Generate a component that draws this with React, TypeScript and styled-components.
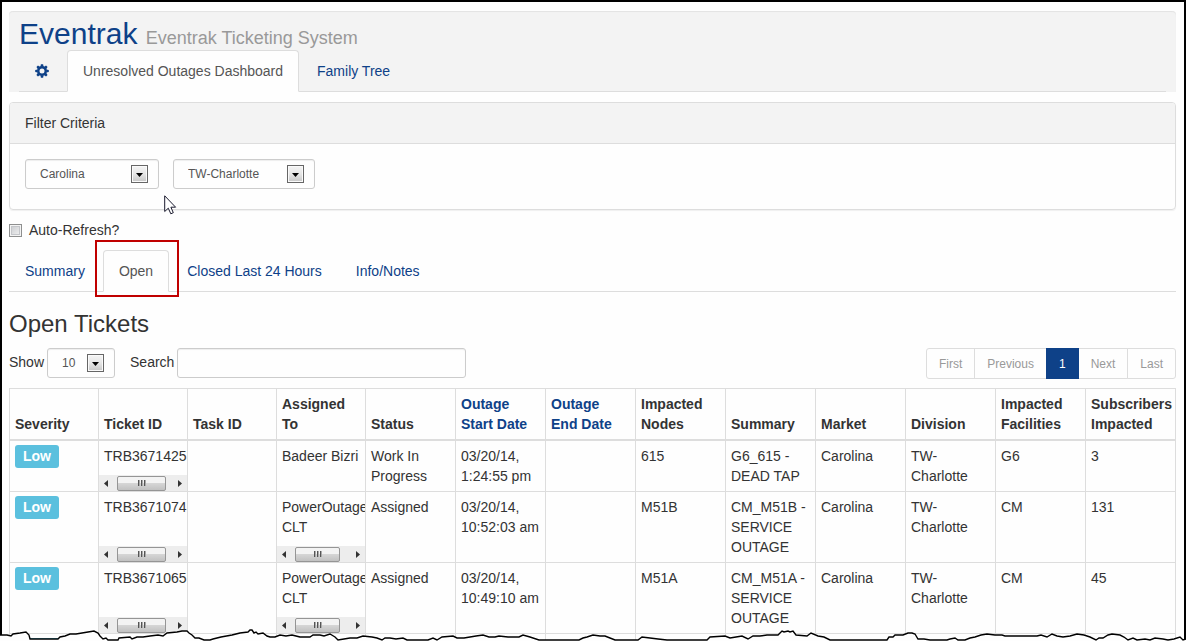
import React from "react";
import styled, { createGlobalStyle, css } from "styled-components";

const color = {
  page: "#fefefe",
  band: "#f3f3f3",
  line: "#dddddd",
  control: "#cccccc",
  text: "#333333",
  link: "#0e4188",
  muted: "#999999",
};

const GlobalStyle = createGlobalStyle`
  *, *::before, *::after { box-sizing: border-box; }
  body {
    margin: 0;
    background: ${color.page};
    color: ${color.text};
    font: 14px/20px "Liberation Sans", Arial, sans-serif;
  }
  button, input, select { font-family: inherit; }
`;

const Frame = styled.div`
  border: solid #000;
  border-width: 2px 2px 0;
  padding: 9px 8px 0 7px;
`;

const Header = styled.header`
  background: ${color.band};
  border-radius: 4px 4px 0 0;
  box-shadow: inset 0 1px 1px #e3e3e3;
  padding: 6px 10px 0;
`;

const Title = styled.h1`
  margin: 0;
  color: ${color.link};
  font-size: 30px;
  line-height: 33px;
  font-weight: normal;
  small {
    color: ${color.muted};
    font-size: 18px;
    line-height: 18px;
  }
`;

const TabList = styled.nav`
  display: flex;
  gap: 2px;
  border-bottom: 1px solid ${color.line};
`;

const Tab = styled.a<{ $active?: boolean }>`
  position: relative;
  display: flex;
  align-items: center;
  height: 42px;
  margin-bottom: -1px;
  padding: 0 15px;
  border: 1px solid transparent;
  border-radius: 4px 4px 0 0;
  color: ${color.link};
  text-decoration: none;
  white-space: nowrap;
  ${(p) =>
    p.$active &&
    css`
      color: #555;
      background: ${color.page};
      border-color: ${color.line};
      border-bottom-color: ${color.page};
    `}
`;

const Highlight = styled.span`
  position: absolute;
  inset: -11px -11px -6px -9px;
  border: 2px solid #c00000;
  pointer-events: none;
`;

const Panel = styled.section`
  position: relative;
  margin-top: 10px;
  border: 1px solid ${color.line};
  border-radius: 4px;
  box-shadow: 0 1px 1px #f0f0f0;
`;

const PanelHeading = styled.h2`
  margin: 0;
  padding: 10px 15px;
  background: ${color.band};
  border-bottom: 1px solid ${color.line};
  border-radius: 3px 3px 0 0;
  font-size: 14px;
  line-height: 20px;
  font-weight: normal;
`;

const PanelBody = styled.div`
  display: flex;
  gap: 14px;
  padding: 15px 15px 20px;
`;

const Pointer = styled.svg`
  position: absolute;
  left: 154px;
  top: 92px;
`;

const SelectBox = styled.span<{ $width: number }>`
  position: relative;
  display: inline-flex;
  width: ${(p) => p.$width}px;
  svg {
    position: absolute;
    right: 11px;
    top: 6px;
    pointer-events: none;
  }
`;

const Select = styled.select`
  appearance: none;
  width: 100%;
  height: 30px;
  padding: 0 30px 0 14px;
  border: 1px solid ${color.control};
  border-radius: 3px;
  background: ${color.page};
  box-shadow: inset 0 1px 1px #eee;
  color: #555;
  font-size: 12px;
`;

const SearchInput = styled.input`
  width: 289px;
  height: 30px;
  padding: 0 10px;
  border: 1px solid ${color.control};
  border-radius: 3px;
  background: ${color.page};
  box-shadow: inset 0 1px 1px #eee;
  font-size: 12px;
`;

const RefreshLabel = styled.label`
  display: flex;
  align-items: center;
  gap: 7px;
  margin-top: 10px;
  width: fit-content;
`;

const Checkbox = styled.input`
  appearance: none;
  width: 13px;
  height: 13px;
  margin: 0;
  border: 1px solid #8e8f8f;
  background: linear-gradient(135deg, #c6c8cc, #f4f4f4);
  box-shadow: inset 0 0 0 1px #f4f4f4, inset 0 0 0 2px #c4c6ca;
  &:checked { background: ${color.link}; }
`;

const ViewTabs = styled(TabList)`
  margin-top: 10px;
`;

const Heading = styled.h2`
  margin: 19px 0 0;
  font-size: 24px;
  line-height: 26px;
  font-weight: normal;
`;

const Toolbar = styled.div`
  display: flex;
  justify-content: space-between;
  align-items: flex-start;
  margin-top: 11px;
`;

const ToolbarControls = styled.div`
  display: flex;
  gap: 15px;
`;

const Field = styled.label`
  display: flex;
  gap: 3px;
  line-height: 28px;
`;

const Pages = styled.div`
  display: flex;
`;

const PageButton = styled.button<{ $current?: boolean }>`
  height: 31px;
  padding: 0 12px;
  border: 1px solid ${color.line};
  background: ${color.page};
  color: ${color.muted};
  font-size: 12px;
  & + & { margin-left: -1px; }
  &:first-child { border-radius: 3px 0 0 3px; }
  &:last-child { border-radius: 0 3px 3px 0; }
  ${(p) =>
    p.$current &&
    css`
      position: relative;
      background: ${color.link};
      border-color: ${color.link};
      color: #fff;
    `}
`;

const Table = styled.table`
  width: 100%;
  margin-top: 9px;
  table-layout: fixed;
  border-collapse: collapse;
`;

const LeadColumn = styled.col`
  width: 89px;
`;

const HeadCell = styled.th`
  padding: 5px 8px 5px 5px;
  border: 1px solid ${color.line};
  border-bottom-width: 2px;
  text-align: left;
  vertical-align: bottom;
  a {
    color: ${color.link};
    text-decoration: none;
  }
`;

const Cell = styled.td`
  position: relative;
  padding: 5px;
  border: 1px solid ${color.line};
  vertical-align: top;
  overflow: hidden;
`;

const StubCell = styled.td`
  height: 7px;
  padding: 0;
  border: solid ${color.line};
  border-width: 0 1px;
`;

const Badge = styled.span`
  display: block;
  width: fit-content;
  margin: -1px 0;
  padding: 0 8px;
  border-radius: 3px;
  background: #5bc0de;
  color: #fff;
  font-weight: bold;
  line-height: 23px;
`;

const ScrollTrack = styled.span`
  position: absolute;
  left: 0;
  right: 0;
  bottom: 0;
  display: flex;
  align-items: center;
  justify-content: space-between;
  height: 16px;
  padding: 0 5px;
  background: #ededed;
`;

const ScrollThumb = styled.span<{ $width: number }>`
  display: flex;
  align-items: center;
  justify-content: center;
  gap: 2px;
  width: ${(p) => p.$width}px;
  height: 15px;
  margin-right: auto;
  margin-left: 9px;
  border: 1px solid #959595;
  border-radius: 2px;
  background: linear-gradient(#f3f3f3 0 45%, #d5d5d5 50%, #c1c1c1);
  i {
    width: 1px;
    height: 6px;
    background: #555;
    box-shadow: 1px 0 #aaa;
  }
`;

const TornEdge = styled.svg`
  position: relative;
  display: block;
  width: calc(100% + 19px);
  height: 13px;
  margin: -13px -10px 0 -9px;
`;

const DropArrow = () => (
  <svg width="17" height="18" viewBox="0 0 17 18" aria-hidden="true">
    <defs>
      <linearGradient id="drop" x1="0" y1="0" x2="0" y2="1">
        <stop offset="0" stopColor="#f2f2f2" />
        <stop offset="0.5" stopColor="#e6e6e6" />
        <stop offset="1" stopColor="#cacaca" />
      </linearGradient>
    </defs>
    <rect x="0.5" y="0.5" width="16" height="17" fill="#fafafa" stroke="#666" />
    <rect x="2" y="2" width="13" height="14" fill="url(#drop)" />
    <path d="M5 8h7l-3.500 4z" fill="#000" />
  </svg>
);

const Gear = () => (
  <svg width="14" height="14" viewBox="0 0 14 14" role="img" aria-label="Settings">
    <circle cx="7" cy="7" r="3.700" fill="none" stroke={color.link} strokeWidth="2.400" />
    {[0, 45, 90, 135, 180, 225, 270, 315].map((angle) => (
      <path key={angle} d="M5.900 0.200h2.200l0.500 2.600h-3.200z" fill={color.link} transform={`rotate(${angle} 7 7)`} />
    ))}
  </svg>
);

const Dropdown = ({ width, options, label }: { width: number; options: string[]; label?: string }) => (
  <SelectBox $width={width}>
    <Select aria-label={label}>
      {options.map((o) => (
        <option key={o}>{o}</option>
      ))}
    </Select>
    <DropArrow />
  </SelectBox>
);

const ScrollBar = ({ thumb }: { thumb: number }) => (
  <ScrollTrack aria-hidden="true">
    <svg width="4" height="7" viewBox="0 0 4 7"><path d="M4 0v7L0 3.500z" fill="#333" /></svg>
    <ScrollThumb $width={thumb}><i /><i /><i /></ScrollThumb>
    <svg width="4" height="7" viewBox="0 0 4 7"><path d="M0 0v7l4-3.500z" fill="#333" /></svg>
  </ScrollTrack>
);

const columns: { name: string; lead?: boolean; sortable?: boolean }[] = [
  { name: "Severity", lead: true },
  { name: "Ticket ID", lead: true },
  { name: "Task ID", lead: true },
  { name: "Assigned To", lead: true },
  { name: "Status" },
  { name: "Outage Start Date", sortable: true },
  { name: "Outage End Date", sortable: true },
  { name: "Impacted Nodes" },
  { name: "Summary" },
  { name: "Market" },
  { name: "Division" },
  { name: "Impacted Facilities" },
  { name: "Subscribers Impacted" },
];

const tickets = [
  { id: "TRB3671425", assigned: "Badeer Bizri", wide: false, status: "Work In Progress", start: "03/20/14, 1:24:55 pm", node: "615", summary: "G6_615 - DEAD TAP", facility: "G6", subs: 3 },
  { id: "TRB3671074", assigned: "PowerOutage CLT", wide: true, status: "Assigned", start: "03/20/14, 10:52:03 am", node: "M51B", summary: "CM_M51B - SERVICE OUTAGE", facility: "CM", subs: 131 },
  { id: "TRB3671065", assigned: "PowerOutage CLT", wide: true, status: "Assigned", start: "03/20/14, 10:49:10 am", node: "M51A", summary: "CM_M51A - SERVICE OUTAGE", facility: "CM", subs: 45 },
];

const tear =
  "0,7 7,7 11,8 13,6 20,5 26,4 29,7 30,11 58,11 60,9 65,8 70,6 76,6 82,5 88,4 94,3 98,5 100,8 103,11 106,10 108,12 118,12 119,10 130,9 132,11 137,9 143,9 150,8 158,7 163,8 167,5 177,4 182,3 187,3 189,5 192,7 195,10 199,10 204,12 210,12 213,11 221,9 232,7 240,5 248,4 250,2 252,2 254,5 256,4 258,6 263,5 267,8 270,9 275,9 280,7 286,8 292,7 300,9 310,9 313,7 320,7 324,8 330,6 335,9 338,12 344,11 350,10 357,10 363,8 372,9 377,10 382,12 385,10 390,10 396,11 403,10 407,12 428,12 433,10 437,12 442,9 453,8 457,10 464,10 470,9 476,8 483,7 489,9 495,9 499,8 508,9 519,9 523,7 530,9 539,12 579,12 583,10 587,9 593,7 600,8 605,8 610,10 615,12 638,12 642,9 650,10 658,11 667,12 707,12 710,9 725,8 730,10 736,9 742,8 748,11 753,8 760,8 767,7 778,7 782,3 784,4 788,3 790,4 793,3 796,7 807,8 811,5 818,8 824,9 830,12 887,12 889,9 893,9 895,7 903,7 908,5 912,5 915,6 918,11 924,11 930,12 947,12 950,11 955,10 958,12 965,12 970,10 975,9 981,7 987,6 995,7 1002,7 1005,8 1013,8 1023,8 1037,8 1041,7 1047,9 1052,6 1057,8 1063,9 1070,8 1077,6 1084,7 1090,9 1096,12 1099,10 1103,10 1108,7 1112,6 1120,7 1124,9 1128,12 1133,10 1137,12 1145,11 1150,12 1155,10 1163,11 1168,12 1174,11 1180,9 1183,12 1186,11";

export default function App() {
  return (
    <>
      <GlobalStyle />
      <Frame>
        <Header>
          <Title>
            Eventrak <small>Eventrak Ticketing System</small>
          </Title>
          <TabList>
            <Tab href="#settings"><Gear /></Tab>
            <Tab href="#dashboard" $active>Unresolved Outages Dashboard</Tab>
            <Tab href="#tree">Family Tree</Tab>
          </TabList>
        </Header>

        <Panel>
          <PanelHeading>Filter Criteria</PanelHeading>
          <PanelBody>
            <Dropdown width={134} label="Division" options={["Carolina"]} />
            <Dropdown width={142} label="Market" options={["TW-Charlotte"]} />
          </PanelBody>
          <Pointer width="13" height="20" viewBox="0 0 13 20" aria-hidden="true">
            <path d="M0.700 0.800V16.500L4.300 13.200L6.800 18.800L9.300 17.700L6.900 12.200H11.600Z" fill="#fff" stroke="#1a1a2e" />
          </Pointer>
        </Panel>

        <RefreshLabel>
          <Checkbox type="checkbox" />
          Auto-Refresh?
        </RefreshLabel>

        <ViewTabs>
          <Tab href="#summary">Summary</Tab>
          <Tab href="#open" $active>
            Open
            <Highlight />
          </Tab>
          <Tab href="#closed">Closed Last 24 Hours</Tab>
          <Tab href="#info">Info/Notes</Tab>
        </ViewTabs>

        <Heading>Open Tickets</Heading>

        <Toolbar>
          <ToolbarControls>
            <Field>
              Show
              <Dropdown width={68} options={["10", "25", "50"]} />
            </Field>
            <Field>
              Search
              <SearchInput type="text" />
            </Field>
          </ToolbarControls>
          <Pages>
            <PageButton>First</PageButton>
            <PageButton>Previous</PageButton>
            <PageButton $current>1</PageButton>
            <PageButton>Next</PageButton>
            <PageButton>Last</PageButton>
          </Pages>
        </Toolbar>

        <Table>
          <colgroup>
            {columns.map((c) => (c.lead ? <LeadColumn key={c.name} /> : <col key={c.name} />))}
          </colgroup>
          <thead>
            <tr>
              {columns.map((c) => (
                <HeadCell key={c.name} scope="col">
                  {c.sortable ? <a href="#sort">{c.name}</a> : c.name}
                </HeadCell>
              ))}
            </tr>
          </thead>
          <tbody>
            {tickets.map((t) => (
              <tr key={t.id}>
                <Cell><Badge>Low</Badge></Cell>
                <Cell>{t.id}<ScrollBar thumb={49} /></Cell>
                <Cell />
                <Cell>{t.assigned}{t.wide && <ScrollBar thumb={45} />}</Cell>
                <Cell>{t.status}</Cell>
                <Cell>{t.start}</Cell>
                <Cell />
                <Cell>{t.node}</Cell>
                <Cell>{t.summary}</Cell>
                <Cell>Carolina</Cell>
                <Cell>TW-Charlotte</Cell>
                <Cell>{t.facility}</Cell>
                <Cell>{t.subs}</Cell>
              </tr>
            ))}
            <tr aria-hidden="true">
              {columns.map((c) => (
                <StubCell key={c.name} />
              ))}
            </tr>
          </tbody>
        </Table>
        <TornEdge viewBox="0 0 1186 13" preserveAspectRatio="none" aria-hidden="true">
          <polygon points={`${tear} 1186,14 0,14`} fill={color.page} />
          <rect x="30" y="10" width="28" height="1" fill="#5bc0de" />
          <polyline points={tear} fill="none" stroke="#000" strokeWidth="1.400" />
        </TornEdge>
      </Frame>
    </>
  );
}
